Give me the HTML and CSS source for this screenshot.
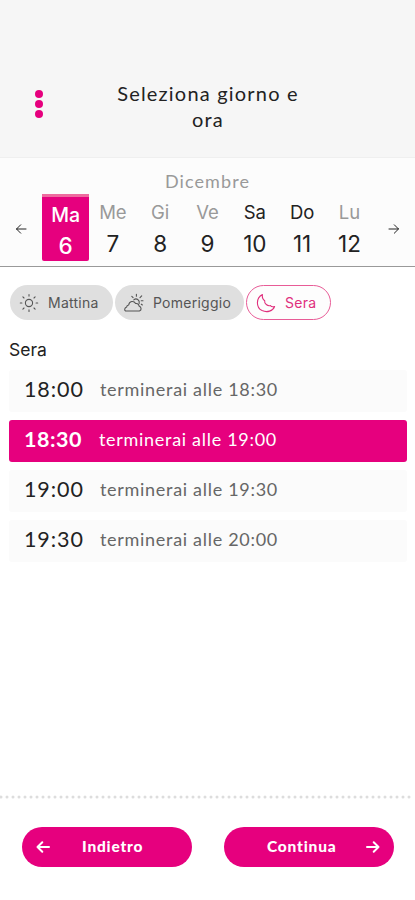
FILE: index.html
```html
<!DOCTYPE html>
<html lang="it">
  <head>
    <meta charset="UTF-8" />
    <meta name="viewport" content="width=device-width, initial-scale=1.0" />
    <title>Seleziona giorno e ora</title>
    <link rel="stylesheet" href="styles.css">
  </head>
  <body>
    <header>
      <button class="menu" aria-label="Menu">
        <span></span>
        <span></span>
        <span></span>
      </button>
      <h1>Seleziona giorno e ora</h1>
    </header>

    <section class="calendario">
      <div class="mese">Dicembre</div>
      <div class="settimana">
        <button class="freccia" aria-label="Precedente">
          <svg width="12" height="12" viewBox="0 0 12 12"><path d="M11 6H1.5M5.7 1.8L1.5 6l4.2 4.2" /></svg>
        </button>
        <div class="giorni">
          <div class="giorno selezionato"><span>Ma</span><b>6</b></div>
          <div class="giorno"><span>Me</span><b>7</b></div>
          <div class="giorno"><span>Gi</span><b>8</b></div>
          <div class="giorno"><span>Ve</span><b>9</b></div>
          <div class="giorno attivo"><span>Sa</span><b>10</b></div>
          <div class="giorno attivo"><span>Do</span><b>11</b></div>
          <div class="giorno"><span>Lu</span><b>12</b></div>
        </div>
        <button class="freccia" aria-label="Successivo">
          <svg width="12" height="12" viewBox="0 0 12 12"><path d="M1 6h9.5M6.3 1.8L10.5 6l-4.2 4.2" /></svg>
        </button>
      </div>
    </section>

    <main>
      <div class="fasce">
        <button class="fascia mattina">
          <svg width="20" height="20" viewBox="0 0 20 20">
            <circle cx="10" cy="10" r="3.6" />
            <path d="M10 1.500v1.600M10 16.900v1.600M1.300 10h1.600M17.100 10h1.600M3.900 3.900l1.100 1.100M15 15l1.100 1.100M3.900 16.100l1.100-1.100M15 5l1.100-1.100" />
          </svg>
          <span>Mattina</span>
        </button>
        <button class="fascia pomeriggio">
          <svg width="22" height="20" viewBox="0 0 22 20">
            <path d="M3.600 18h13.800c2.300-1 2.300-3.600-.3-4.900-.3-2-1.500-2.900-3.500-2.600-1.700-3.200-6.400-2.600-6.900 1.500-1.300.1-2 .9-2.100 2.100-2.200.9-2.500 2.900-1 3.900z" />
            <path d="M11.800 6.800c2.600-2.200 6.200.2 5.400 3.600M14.400 1.300v1.900M9.800 3.300l1.300 1.300M19.700 2.800l-1.700 1.800M21 7.800h-1.800M20.400 12l-1.100-.8" />
          </svg>
          <span>Pomeriggio</span>
        </button>
        <button class="fascia sera">
          <svg width="20" height="20" viewBox="0 0 20 20">
            <path d="M6.400 1.500C-.2 5-.2 14.400 6.100 17.600c5 2.400 10.800.4 12.500-4.100-2 .6-3.400.3-4.200-1-1.200.4-2.700.2-4.100-1-1.400-1.100-1.900-2.300-1.600-3.700-1.900-1.300-2.700-3.300-2.300-6.300z" />
          </svg>
          <span>Sera</span>
        </button>
      </div>

      <h2>Sera</h2>

      <div class="orari">
        <div class="orario"><strong>18:00</strong><span>terminerai alle 18:30</span></div>
        <div class="orario scelto"><strong>18:30</strong><span>terminerai alle 19:00</span></div>
        <div class="orario"><strong>19:00</strong><span>terminerai alle 19:30</span></div>
        <div class="orario"><strong>19:30</strong><span>terminerai alle 20:00</span></div>
      </div>
    </main>

    <footer>
      <svg class="puntini" width="415" height="4"><line x1="1" y1="2" x2="415" y2="2" /></svg>
      <div class="azioni">
        <button class="indietro">
          <svg width="14" height="14" viewBox="0 0 14 14"><path d="M13 7H1.500M6.300 2.200L1.500 7l4.800 4.800" /></svg>
          <span>Indietro</span>
        </button>
        <button class="continua">
          <span>Continua</span>
          <svg width="14" height="14" viewBox="0 0 14 14"><path d="M1 7h11.500M7.700 2.200L12.500 7l-4.800 4.800" /></svg>
        </button>
      </div>
    </footer>
  </body>
</html>
```

FILE: styles.css
```css
* {
  box-sizing: border-box;
}

body {
  margin: 0;
  height: 900px;
  display: flex;
  flex-direction: column;
  background-color: white;
  font-family: Lato, "Liberation Sans", sans-serif;
  color: #222;
}

button {
  border: none;
  background: none;
  padding: 0;
  font-family: inherit;
  color: inherit;
  cursor: pointer;
}

svg {
  fill: none;
  stroke: currentColor;
  stroke-linecap: round;
  stroke-linejoin: round;
  flex-shrink: 0;
}

header {
  height: 158px;
  padding: 80px 35px 0;
  background-color: #f6f6f6;
  border-bottom: 1px solid #efefef;
  display: flex;
}

.menu {
  width: 8px;
  height: 28px;
  margin-top: 10px;
  display: flex;
  flex-direction: column;
  justify-content: space-between;
}

.menu span {
  width: 8px;
  height: 8px;
  border-radius: 50%;
  background-color: #e6007e;
}

h1 {
  width: 200px;
  margin: 0 0 0 65px;
  font-size: 20px;
  font-weight: 400;
  line-height: 26px;
  letter-spacing: 1.2px;
  text-align: center;
}

.calendario {
  height: 109px;
  padding-top: 12px;
  background-color: #fcfcfc;
  border-bottom: 1px solid #999;
}

.mese {
  height: 24px;
  line-height: 23px;
  font-size: 18px;
  letter-spacing: 1.1px;
  text-align: center;
  color: #999;
}

.settimana {
  display: flex;
  align-items: center;
}

.freccia {
  width: 42px;
  height: 12px;
  margin-top: 2px;
  display: flex;
  justify-content: center;
}

.giorni {
  width: 332px;
  display: grid;
  grid-template-columns: repeat(7, 1fr);
}

.giorno {
  height: 67px;
  padding-top: 6px;
  display: flex;
  flex-direction: column;
  align-items: center;
  font-family: Inter, sans-serif;
}

.giorno span {
  font-size: 18.5px;
  line-height: 24px;
  color: #999;
}

.giorno b {
  font-size: 22.5px;
  font-weight: 400;
  line-height: 39px;
}

.giorno.attivo span {
  color: #222;
}

.giorno.selezionato {
  padding-top: 6px;
  background-color: #e6007e;
  border-top: 3px solid #ee6b9f;
  border-radius: 0 0 2px 2px;
  color: white;
}

.giorno.selezionato span {
  color: white;
  font-weight: 500;
  font-size: 19.5px;
}

.giorno.selezionato b {
  font-weight: 500;
  line-height: 37px;
}

main {
  flex: 1;
  padding: 18px 8px 0 9px;
}

.fasce {
  display: flex;
  gap: 2px;
  padding-left: 1px;
}

.fascia {
  height: 35px;
  border-radius: 18px;
  display: flex;
  align-items: center;
  background-color: #dfdfdf;
  color: #555;
  font-family: Inter, sans-serif;
  font-size: 14px;
  letter-spacing: 0.25px;
}

.fascia svg {
  stroke-width: 1.1;
}

.mattina {
  width: 103px;
  padding-left: 9px;
  gap: 9px;
}

.pomeriggio {
  width: 129px;
  padding-left: 7px;
  gap: 9px;
}

.sera {
  width: 85px;
  padding-left: 9px;
  gap: 9px;
  border: 1px solid #e85c97;
  background-color: #fdfdfd;
  color: #e0307d;
}

h2 {
  margin: 16px 0 8px;
  font-family: Inter, sans-serif;
  font-size: 17.5px;
  font-weight: 400;
  line-height: 27px;
  height: 26px;
}

.orari {
  display: flex;
  flex-direction: column;
  gap: 8px;
}

.orario {
  height: 42px;
  padding: 0 0 4px 15px;
  border-radius: 3px;
  display: flex;
  align-items: center;
  background-color: #fbfbfb;
}

.orario strong {
  width: 76px;
  font-size: 21.5px;
  font-weight: 400;
  letter-spacing: 0.9px;
}

.orario span {
  font-size: 18px;
  letter-spacing: 0.7px;
  color: #666;
}

.orario.scelto {
  background-color: #e6007e;
  color: white;
}

.orario.scelto span {
  color: white;
}

.orario.scelto strong {
  width: 75px;
  font-weight: 700;
  letter-spacing: 0.5px;
}

footer {
  height: 105px;
}

.puntini {
  display: block;
  stroke: #ddd;
  stroke-width: 3;
  stroke-dasharray: 0 6;
}

.azioni {
  display: flex;
  justify-content: space-between;
  padding: 28px 21px 0 22px;
}

.azioni button {
  width: 170px;
  height: 40px;
  padding: 0 14px;
  border-radius: 20px;
  display: flex;
  align-items: center;
  background-color: #e6007e;
  color: white;
  font-size: 15.5px;
  font-weight: 900;
  letter-spacing: 0.8px;
}

.azioni svg {
  stroke-width: 2;
}

.azioni span {
  padding-bottom: 2px;
}

.indietro span {
  margin-left: 32px;
}

.continua {
  justify-content: space-between;
}

.continua span {
  margin-left: 29px;
}
```
